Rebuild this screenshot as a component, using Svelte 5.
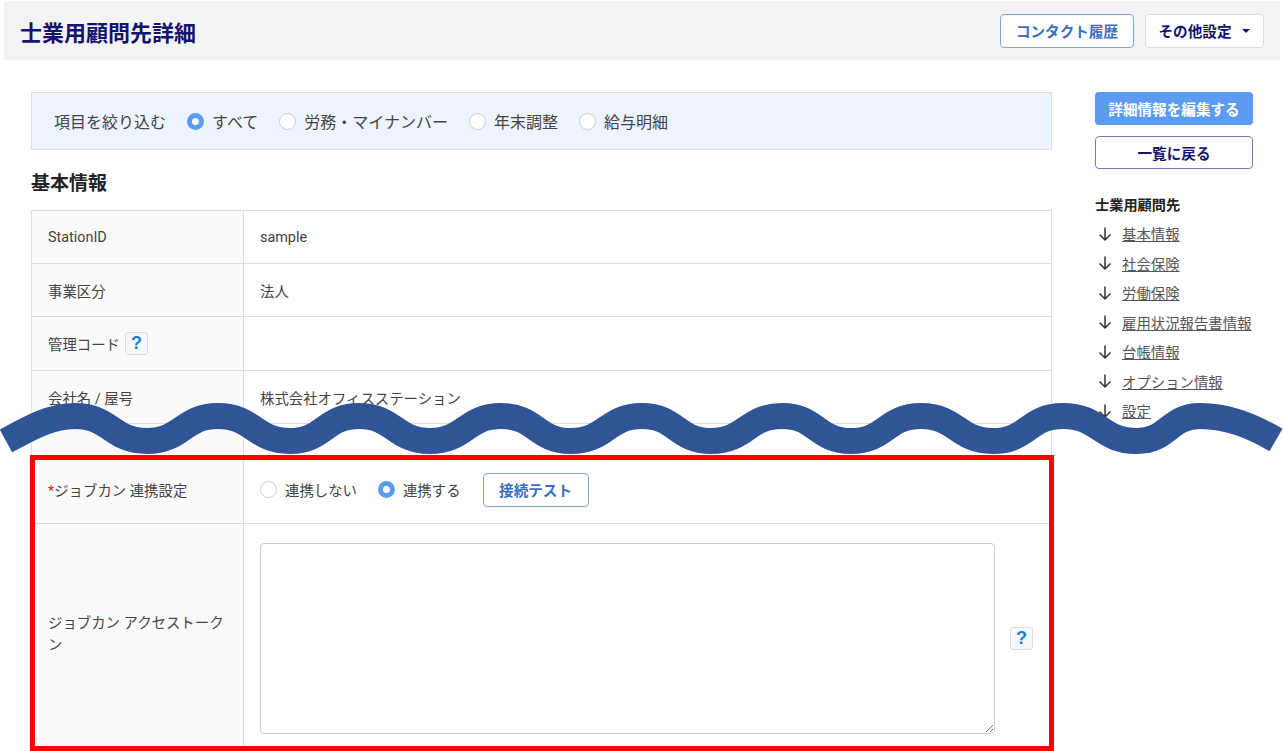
<script>
  const filters = [
    { label: 'すべて', checked: true },
    { label: '労務・マイナンバー', checked: false },
    { label: '年末調整', checked: false },
    { label: '給与明細', checked: false }
  ];

  const sections = ['基本情報', '社会保険', '労働保険', '雇用状況報告書情報', '台帳情報', 'オプション情報', '設定'];

  // x positions of the wave's turning points, alternating crest and trough
  const turns = [75, 147, 218, 290, 359, 430, 501, 571, 642, 711, 782, 851, 921, 993, 1063, 1137, 1200];
  const crestY = 416;
  const troughY = 441;

  function wavePath() {
    let d = `M6 441 C28 429 50 ${crestY} 75 ${crestY}`;
    for (let i = 1; i < turns.length; i++) {
      const x0 = turns[i - 1];
      const x1 = turns[i];
      const mid = (x0 + x1) / 2;
      const y = i % 2 === 1 ? troughY : crestY;
      d += ` C${mid} ${i % 2 === 1 ? crestY : troughY} ${mid} ${y} ${x1} ${y}`;
    }
    d += ` C1228 ${crestY} 1252 426 1276 440`;
    return d;
  }
</script>

<div class="sheet">
  <header class="top">
    <h1>士業用顧問先詳細</h1>
    <div class="top-actions">
      <button class="btn btn-outline-blue">コンタクト履歴</button>
      <button class="btn btn-menu">その他設定<span class="caret"></span></button>
    </div>
  </header>

  <div class="body">
    <main class="main">
      <div class="filter">
        <span class="filter-title">項目を絞り込む</span>
        {#each filters as f}
          <label class="radio">
            <span class="dot" class:on={f.checked}></span>{f.label}
          </label>
        {/each}
      </div>

      <h2>基本情報</h2>

      <table class="info upper">
        <tbody>
          <tr class="r53"><th>StationID</th><td>sample</td></tr>
          <tr class="r53"><th>事業区分</th><td>法人</td></tr>
          <tr class="r54"><th><span class="with-help">管理コード<span class="help">?</span></span></th><td></td></tr>
          <tr class="r53"><th>会社名 / 屋号</th><td>株式会社オフィスステーション</td></tr>
          <tr class="cut"><th></th><td></td></tr>
        </tbody>
      </table>

      <div class="framed">
        <table class="info lower">
          <tbody>
            <tr class="r68">
              <th><span class="req">*</span>ジョブカン 連携設定</th>
              <td>
                <div class="link-row">
                  <label class="radio small"><span class="dot"></span>連携しない</label>
                  <label class="radio small"><span class="dot on"></span>連携する</label>
                  <button class="btn btn-outline-blue test">接続テスト</button>
                </div>
              </td>
            </tr>
            <tr>
              <th class="token-label">ジョブカン アクセストークン</th>
              <td class="token-cell">
                <div class="token-row">
                  <textarea></textarea>
                  <span class="help">?</span>
                </div>
              </td>
            </tr>
          </tbody>
        </table>
        <div class="frame"></div>
      </div>
    </main>

    <aside class="side">
      <button class="btn btn-primary">詳細情報を編集する</button>
      <button class="btn btn-outline-navy">一覧に戻る</button>
      <div class="side-title">士業用顧問先</div>
      <ul>
        {#each sections as s}
          <li>
            <svg width="16" height="16" viewBox="0 0 16 16" fill="none" stroke="#333" stroke-width="1.5">
              <path d="M8 1.5V14M2.5 8.5L8 14l5.5-5.5" />
            </svg>
            <a href="#top">{s}</a>
          </li>
        {/each}
      </ul>
    </aside>
  </div>

  <svg class="wave" width="1283" height="751" viewBox="0 0 1283 751" fill="none">
    <path d={wavePath()} stroke="#2f5597" stroke-width="26" />
  </svg>
</div>

<style>
  :global(html), :global(body) {
    margin: 0;
    background: #fff;
    overflow: hidden;
  }

  .sheet {
    position: relative;
    height: 751px;
    padding-top: 1px;
    box-sizing: border-box;
    overflow: hidden;
    font-family: Roboto, "Noto Sans CJK JP", sans-serif;
    color: #444;
    font-size: 14.4px;
  }

  .top {
    display: flex;
    align-items: center;
    justify-content: space-between;
    height: 59px;
    margin: 0 3px 0 4px;
    padding: 0 16px;
    box-sizing: border-box;
    background: #f3f3f3;
  }

  h1 {
    margin: 0;
    font-size: 22px;
    font-weight: 700;
    color: #14146e;
  }

  .top-actions {
    display: flex;
    gap: 11px;
  }

  .btn {
    box-sizing: border-box;
    height: 34px;
    padding: 0;
    border-radius: 4px;
    font-family: inherit;
    font-size: 14.6px;
    font-weight: 700;
    background: #fff;
  }

  .btn-outline-blue {
    width: 134px;
    border: 1px solid #7ba6de;
    color: #3a6fc0;
  }

  .btn-menu {
    display: flex;
    align-items: center;
    justify-content: center;
    gap: 11px;
    width: 119px;
    border: 1px solid #ddd;
    color: #14146e;
  }

  .caret {
    width: 0;
    height: 0;
    border-left: 4px solid transparent;
    border-right: 4px solid transparent;
    border-top: 4px solid #14146e;
  }

  .body {
    display: flex;
    gap: 43px;
    padding: 32px 0 0 31px;
  }

  .main {
    width: 1021px;
    flex: none;
  }

  .filter {
    display: flex;
    align-items: center;
    gap: 21px;
    height: 58px;
    padding-left: 22px;
    box-sizing: border-box;
    background: #edf4fe;
    border: 1px solid #ddd;
    font-size: 16px;
  }

  .radio {
    display: flex;
    align-items: center;
    gap: 8px;
    color: #444;
  }

  .dot {
    box-sizing: border-box;
    width: 17px;
    height: 17px;
    flex: none;
    border: 1px solid #ccc;
    border-radius: 50%;
    background: #fff;
  }

  .dot.on {
    border: 5px solid #5b9bf2;
  }

  h2 {
    margin: 21px 0 13px;
    font-size: 19px;
    line-height: 26px;
    font-weight: 700;
    color: #222;
  }

  .info {
    width: 1021px;
    table-layout: fixed;
    border-collapse: collapse;
  }

  .info th,
  .info td {
    border: 1px solid #ddd;
    padding: 0 16px;
    font-weight: 400;
    text-align: left;
    color: #444;
  }

  .info th {
    width: 179px;
    background: #fafafa;
  }

  .r53 th { height: 52px; }
  .r54 th { height: 53px; }
  .r68 th { height: 67px; }
  .cut th { height: 31px; }

  .upper tr:last-child th,
  .upper tr:last-child td {
    border-bottom: 0;
  }

  .with-help {
    display: flex;
    align-items: center;
    gap: 5px;
  }

  .help {
    display: inline-flex;
    align-items: center;
    justify-content: center;
    box-sizing: border-box;
    width: 23px;
    height: 23px;
    flex: none;
    border: 1px solid #ddd;
    border-radius: 3px;
    background: #f5f9fd;
    color: #1a7fd0;
    font-family: "Liberation Sans", sans-serif;
    font-size: 18px;
    font-weight: 700;
  }

  .framed {
    position: relative;
    height: 296px;
  }

  .frame {
    position: absolute;
    inset: 0 -2px 0 -1px;
    border: 5.5px solid #f00;
    pointer-events: none;
  }

  .req {
    color: #e02020;
  }

  .link-row {
    display: flex;
    align-items: center;
    gap: 21px;
  }

  .small {
    font-size: 14.4px;
  }

  .test {
    width: 106px;
    margin-left: 1px;
  }

  .token-label {
    height: 222px;
    padding-right: 14px;
    line-height: 22px;
  }

  .info .token-cell {
    padding: 17px 0 10px 16px;
  }

  .token-row {
    display: flex;
    align-items: center;
    gap: 15px;
  }

  textarea {
    display: block;
    box-sizing: border-box;
    width: 735px;
    height: 191px;
    margin: 0;
    border: 1px solid #ccc;
    border-radius: 4px;
    background: #fff;
  }

  .side {
    width: 158px;
    flex: none;
    display: flex;
    flex-direction: column;
  }

  .btn-primary {
    height: 33px;
    border: 0;
    background: #5b9bf2;
    color: #fff;
  }

  .btn-outline-navy {
    height: 33px;
    margin-top: 11px;
    border: 1px solid #7d7ab5;
    color: #14146e;
  }

  .side-title {
    margin-top: 27px;
    font-size: 14.2px;
    line-height: 18px;
    font-weight: 700;
    color: #222;
  }

  ul {
    margin: 5px 0 0;
    padding: 0;
    list-style: none;
  }

  li {
    display: flex;
    align-items: center;
    gap: 9px;
    height: 29.5px;
  }

  li svg {
    flex: none;
    margin-left: 2px;
  }

  li a {
    color: #555;
    font-size: 14.4px;
    text-decoration: underline;
    white-space: nowrap;
  }

  .wave {
    position: absolute;
    top: 0;
    left: 0;
    pointer-events: none;
  }
</style>
